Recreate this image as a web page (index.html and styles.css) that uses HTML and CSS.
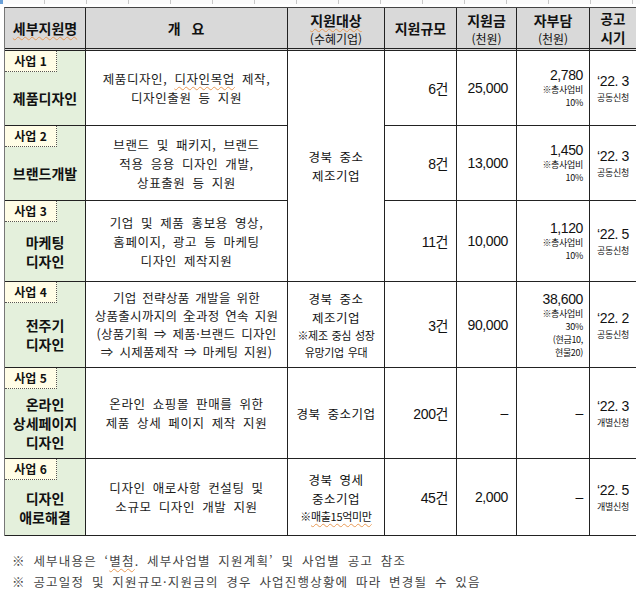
FILE: index.html
```html
<!DOCTYPE html>
<html lang="ko">
<head>
<meta charset="utf-8">
<link rel="stylesheet" href="styles.css">
</head>
<body>
<div class="strip"></div>
<div class="grid">
  <div class="h c1"><div><span class="sq">세부지원명</span></div></div>
  <div class="h c2"><div>개&nbsp;&nbsp;요</div></div>
  <div class="h"><div><span class="sq">지원대상</span></div><div class="sub">(수혜기업)</div></div>
  <div class="h"><div>지원규모</div></div>
  <div class="h"><div>지원금</div><div class="sub">(천원)</div></div>
  <div class="h"><div>자부담</div><div class="sub">(천원)</div></div>
  <div class="h last"><div>공고</div><div>시기</div></div>

  <!-- row 1 -->
  <div class="name"><div class="badge">사업 1</div><div class="nm"><div>제품디자인</div></div></div>
  <div class="desc"><div>제품디자인, <span class="sq">디자인목업</span> 제작,<br>디자인출원 등 지원</div></div>
  <div class="target span3"><div>경북 중소<br>제조기업</div></div>
  <div class="num">6건</div>
  <div class="num">25,000</div>
  <div class="self"><span class="big">2,780</span><span class="sm">※총사업비</span><span class="sm">10%</span></div>
  <div class="when last"><span class="big">‘22. 3</span><span class="sm">공동신청</span></div>

  <!-- row 2 -->
  <div class="name"><div class="badge">사업 2</div><div class="nm"><div>브랜드개발</div></div></div>
  <div class="desc"><div>브랜드 및 패키지, 브랜드<br>적용 응용 디자인 개발,<br>상표출원 등 지원</div></div>
  <div class="num">8건</div>
  <div class="num">13,000</div>
  <div class="self"><span class="big">1,450</span><span class="sm">※총사업비</span><span class="sm">10%</span></div>
  <div class="when last"><span class="big">‘22. 3</span><span class="sm">공동신청</span></div>

  <!-- row 3 -->
  <div class="name"><div class="badge">사업 3</div><div class="nm"><div>마케팅<br>디자인</div></div></div>
  <div class="desc"><div>기업 및 제품 홍보용 영상,<br>홈페이지, 광고 등 마케팅<br>디자인 제작지원</div></div>
  <div class="num">11건</div>
  <div class="num">10,000</div>
  <div class="self"><span class="big">1,120</span><span class="sm">※총사업비</span><span class="sm">10%</span></div>
  <div class="when last"><span class="big">‘22. 5</span><span class="sm">공동신청</span></div>

  <!-- row 4 -->
  <div class="name"><div class="badge">사업 4</div><div class="nm"><div>전주기<br>디자인</div></div></div>
  <div class="desc tight"><div>기업 전략상품 개발을 위한<br>상품출시까지의 全과정 연속 지원<br>(상품기획 ⇒ 제품·브랜드 디자인<br>⇒ 시제품제작 ⇒ 마케팅 지원)</div></div>
  <div class="target"><div>경북 중소<br>제조기업</div><div class="note">※제조 중심 성장<br>유망기업 우대</div></div>
  <div class="num">3건</div>
  <div class="num">90,000</div>
  <div class="self"><span class="big">38,600</span><span class="sm">※총사업비</span><span class="sm">30%</span><span class="sm">(현금10,</span><span class="sm">현물20)</span></div>
  <div class="when last"><span class="big">‘22. 2</span><span class="sm">공동신청</span></div>

  <!-- row 5 -->
  <div class="name"><div class="badge">사업 5</div><div class="nm"><div>온라인<br>상세페이지<br>디자인</div></div></div>
  <div class="desc"><div>온라인 쇼핑몰 판매를 위한<br>제품 상세 페이지 제작 지원</div></div>
  <div class="target"><div>경북 중소기업</div></div>
  <div class="num">200건</div>
  <div class="num">–</div>
  <div class="self"><span class="big">–</span></div>
  <div class="when last"><span class="big">‘22. 3</span><span class="sm">개별신청</span></div>

  <!-- row 6 -->
  <div class="name"><div class="badge">사업 6</div><div class="nm"><div>디자인<br>애로해결</div></div></div>
  <div class="desc"><div>디자인 애로사항 컨설팅 및<br>소규모 디자인 개발 지원</div></div>
  <div class="target"><div>경북 영세<br>중소기업</div><div class="note">※<span class="sq">매출15억미만</span></div></div>
  <div class="num">45건</div>
  <div class="num">2,000</div>
  <div class="self"><span class="big">–</span></div>
  <div class="when last"><span class="big">‘22. 5</span><span class="sm">개별신청</span></div>
</div>
<div class="notes">
  <p>※ 세부내용은 ‘<span class="sq">별첨</span>. 세부사업별 지원계획’ 및 사업별 공고 참조</p>
  <p>※ 공고일정 및 지원규모·지원금의 경우 사업진행상황에 따라 변경될 수 있음</p>
</div>
</body>
</html>
```

FILE: styles.css
```css
html, body {
  margin: 0;
  padding: 0;
  background: #fff;
}
body {
  width: 640px;
  height: 591px;
  overflow: hidden;
  font-family: "Noto Sans CJK KR", "Liberation Sans", sans-serif;
  color: #111;
}
.strip {
  height: 4px;
  margin-bottom: 3px;
  background-color: #fbfbfb;
  background-image: repeating-linear-gradient(to right, transparent 0, transparent 41px, #c8c8c8 41px, #c8c8c8 42px);
  border-left: 3px solid #6aa0d8;
}
.grid {
  margin-left: 4px;
  width: 631px;
  display: grid;
  grid-template-columns: 81px 202px 97px 72px 60px 73px 46px;
  grid-template-rows: 43px 75px 75px 81px 86px 91px 77px;
  border-left: 1px solid #777;
  border-top: 1px solid #444;
}
.grid > div {
  border-right: 1px solid #222;
  border-bottom: 1px solid #222;
  box-sizing: border-box;
}
.grid > div.last { border-right: none; }
.h {
  background: #d9d9d9;
  border-bottom: 3px double #222 !important;
  display: flex;
  flex-direction: column;
  align-items: center;
  justify-content: center;
  font-weight: 700;
  font-size: 14px;
  line-height: 20px;
  text-align: center;
}
.h .sub {
  font-weight: 400;
  font-size: 12px;
  line-height: 17px;
}
.h.last { line-height: 19px; font-size: 13.5px; }
.h.c2 { letter-spacing: 1px; }
.sq {
  text-decoration: underline wavy #e89a55;
  text-decoration-thickness: 1px;
  text-underline-offset: 2px;
}
.name {
  background: #e4f0dc;
  display: flex;
  flex-direction: column;
}
.badge {
  width: 52px;
  height: 21px;
  box-sizing: border-box;
  background: #fffde6;
  border-right: 1px dotted #555;
  border-bottom: 1px dotted #555;
  font-weight: 700;
  font-size: 12px;
  line-height: 20px;
  text-align: center;
}
.nm {
  flex: 1;
  display: flex;
  align-items: center;
  justify-content: center;
  text-align: center;
  font-weight: 700;
  font-size: 14px;
  line-height: 19px;
}
.desc {
  display: flex;
  align-items: center;
  justify-content: center;
  text-align: center;
  font-size: 12.5px;
  line-height: 19px;
  letter-spacing: 0.6px;
  word-spacing: 3px;
  color: #1a1a1a;
}
.desc.tight {
  line-height: 18px;
  letter-spacing: 0.3px;
  word-spacing: 2px;
  white-space: nowrap;
}
.target {
  display: flex;
  flex-direction: column;
  align-items: center;
  justify-content: center;
  text-align: center;
  font-size: 12.5px;
  line-height: 19px;
  letter-spacing: 0.5px;
  word-spacing: 3px;
}
.span3 { grid-row: span 3; }
.target .note {
  font-size: 11px;
  line-height: 17px;
  letter-spacing: -0.3px;
  word-spacing: 1px;
}
.num {
  display: flex;
  align-items: center;
  justify-content: flex-end;
  padding-right: 8px;
  font-family: "Liberation Sans", "Noto Sans CJK KR", sans-serif;
  font-size: 14px;
  letter-spacing: -0.4px;
}
.self {
  display: flex;
  flex-direction: column;
  align-items: flex-end;
  justify-content: center;
  padding-right: 6px;
  font-family: "Liberation Sans", "Noto Sans CJK KR", sans-serif;
}
.big {
  font-size: 14px;
  line-height: 16px;
  letter-spacing: -0.4px;
}
.sm {
  font-family: "Noto Sans CJK KR", sans-serif;
  font-size: 9px;
  line-height: 13px;
  letter-spacing: -0.3px;
}
.when {
  display: flex;
  flex-direction: column;
  align-items: center;
  justify-content: center;
  font-family: "Liberation Sans", "Noto Sans CJK KR", sans-serif;
}
.when .big { line-height: 19px; }
.notes {
  margin: 14px 0 0 12px;
  font-size: 12.5px;
  color: #444;
  letter-spacing: 1.2px;
  word-spacing: 3px;
}
.notes p {
  margin: 0;
  line-height: 21px;
  height: 21px;
  white-space: nowrap;
}
```
